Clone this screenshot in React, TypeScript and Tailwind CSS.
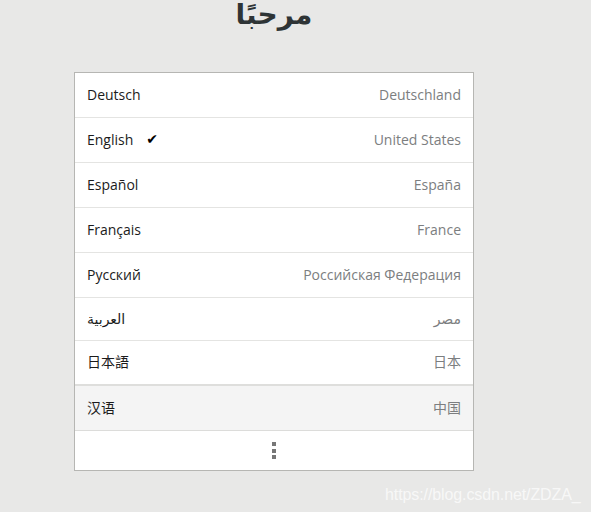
import React from "react";

const languages = [
  { name: "Deutsch", region: "Deutschland", h: "h-[45px]" },
  { name: "English", region: "United States", h: "h-[45px]", checked: true },
  { name: "Español", region: "España", h: "h-[45px]" },
  { name: "Français", region: "France", h: "h-[45px]" },
  { name: "Русский", region: "Российская Федерация", h: "h-[45px]" },
  { name: "العربية", region: "مصر", h: "h-[43px]" },
  { name: "日本語", region: "日本", h: "h-[45px]" },
  { name: "汉语", region: "中国", h: "h-[45px]", hover: true },
];

export default function App() {
  return (
    <div
      className="relative h-[512px] w-full overflow-hidden bg-[#e8e8e7]"
      style={{ fontFamily: '"Open Sans", "DejaVu Sans", "Noto Sans CJK SC", sans-serif' }}
    >
      <div className="ml-[74px] w-[400px]">
        {/* Title */}
        <h1 className="-mt-[7px] h-[79px] text-center text-[28px] font-bold leading-[40px] text-[#2e3436]">
          مرحبًا
        </h1>

        {/* Language list */}
        <div className="border border-[#b6b6b3] bg-white">
          {languages.map((lang) => (
            <div
              key={lang.name}
              className={`flex items-center justify-between border-b px-[12px] pb-[2px] text-[14px] ${lang.h} ${
                lang.hover ? "border-[#dcdcda] bg-[#f4f4f4]" : "border-[#e4e4e2] bg-white"
              } ${lang.name === "日本語" ? "border-b-2 border-b-[#dededc]" : ""}`}
            >
              <div className="flex items-center gap-[13px] text-[#1b1b1b]">
                <span>{lang.name}</span>
                {lang.checked && <span className="text-[14px] leading-none text-black">✔</span>}
              </div>
              <span className="text-[#7c7e80]">{lang.region}</span>
            </div>
          ))}

          {/* More */}
          <div className="flex h-[39px] flex-col items-center justify-center gap-[2.5px]">
            <span className="h-[4px] w-[4px] bg-[#777]" />
            <span className="h-[4px] w-[4px] bg-[#777]" />
            <span className="h-[4px] w-[4px] bg-[#777]" />
          </div>
        </div>
      </div>

      {/* Watermark */}
      <div
        className="absolute left-[385px] top-[483px] text-[16px] tracking-[-0.1px] text-white/70"
        style={{ fontFamily: '"Liberation Sans", Arial, sans-serif' }}
      >
        https://blog.csdn.net/ZDZA_
      </div>
    </div>
  );
}
